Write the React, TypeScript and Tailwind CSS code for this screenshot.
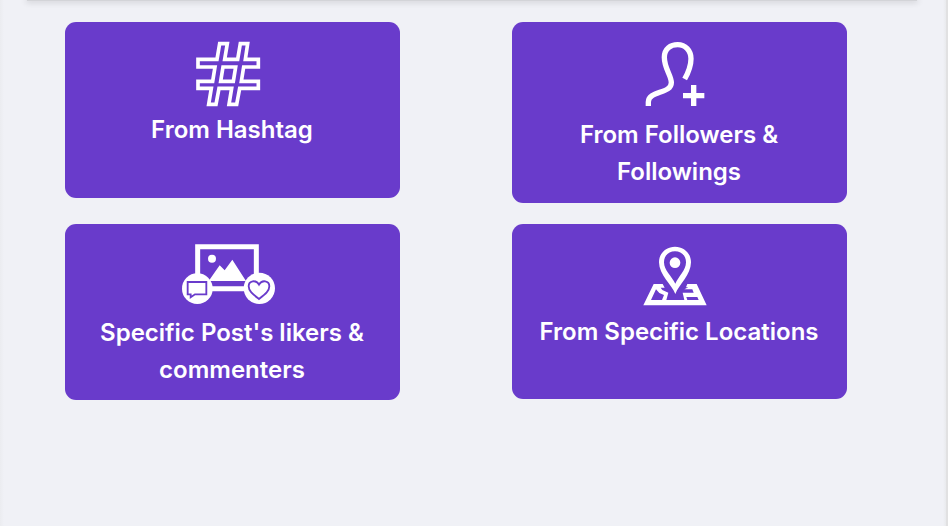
import type { ReactNode } from "react";

interface CardProps {
  title: string;
  className: string;
  children: ReactNode;
}

const SourceCard: React.FC<CardProps> = ({ title, className, children }) => (
  <button
    className={`flex w-[335px] flex-col items-center rounded-[11px] bg-[#693bcb] px-5 pt-2 text-white ${className}`}
  >
    {children}
    <span className="mr-px text-center text-2xl leading-[37px] font-[620]">
      {title}
    </span>
  </button>
);

const HashtagIcon = () => (
  <svg
    className="mr-[5px] h-[81px] w-[100px]"
    viewBox="0 0 300 243"
    fill="none"
    stroke="currentColor"
    strokeWidth="11"
  >
    <path d="M119 41H142L134 88H173L181 41H203L196 88H235V111H191L184 154H235V175H179L170 223H147L155 175H117L108 223H86L94 175H54V154H98L105 111H54V88H111Z" />
    <path d="M129 111H167L160 154H122Z" />
  </svg>
);

const FollowersIcon = () => (
  <svg
    className="mr-[9px] h-[86px] w-[100px]"
    viewBox="0 0 300 258"
    fill="none"
    stroke="currentColor"
  >
    <path
      d="M70 228V216C70 182 139 192 139 158C139 136 118 116 118 82C118 56 137 44 158 44C181 44 198 61 198 86C198 109 189 129 179 147"
      strokeWidth="16"
    />
    <path d="M206 165V228M174 197H238" strokeWidth="16" />
  </svg>
);

const PostIcon = () => (
  <svg className="mr-[5px] h-[82px] w-[120px]" viewBox="0 -9 360 246">
    <path
      d="M83 35H259V161H83Z"
      fill="none"
      stroke="currentColor"
      strokeWidth="15"
    />
    <circle cx="126" cy="71" r="12" fill="currentColor" />
    <path d="M116 138L149 91L164 106L187 74L228 138Z" fill="currentColor" />
    <circle cx="82" cy="161" r="46" fill="currentColor" />
    <circle cx="268" cy="160" r="47" fill="currentColor" />
    <g fill="none" stroke="#693bcb" strokeWidth="5.5">
      <path d="M53 141H109V178H75L62 187V178H53Z" />
      <path d="M267 192C248 177 236 168 236 154C236 137 258 133 267 149C276 133 298 137 298 154C298 168 286 177 267 192Z" />
    </g>
  </svg>
);

const LocationIcon = () => (
  <svg
    className="mr-[9px] h-[81px] w-[100px]"
    viewBox="0 -9 300 243"
    fill="currentColor"
  >
    <path
      fillRule="evenodd"
      d="M151 177C141 151 102 119 102 82C102 54 124 35 150 35C177 35 198 55 198 82C198 119 161 151 151 177ZM151 146C160 125 183 106 183 82C183 62 169 49 150 49C131 49 117 62 117 82C117 106 141 125 151 146Z"
    />
    <circle cx="150" cy="83" r="16" />
    {/* folded map under the pin */}
    <path
      fillRule="evenodd"
      d="M86 147H113L119 158H107L112 165L130 173L124 195H178L173 173H206L202 163H178L190 157H183L187 147H215L245 211H55ZM93 163L78 195H111L117 180L103 174ZM184 186L187 195H221L217 186Z"
    />
  </svg>
);

export default function App() {
  return (
    <div className="flex h-[526px] w-[948px] justify-between overflow-hidden bg-[#f0f1f6] font-['Inter',sans-serif]">
      <div className="w-1 shrink-0 bg-linear-to-r from-[#ebecf0] to-[#f0f1f6]" />
      <div className="w-[939px]">
        {/* lower edge of the panel above */}
        <div className="ml-[23px] h-px w-[890px] bg-[#d3d4d8] shadow-[0_0_6px_1px_rgba(0,0,0,0.2)]" />
        <div className="mt-[21px] ml-[61px] flex gap-28">
          <div className="flex flex-col">
            <SourceCard title="From Hashtag" className="h-44">
              <HashtagIcon />
            </SourceCard>
            <SourceCard
              title="Specific Post's likers & commenters"
              className="mt-[26px] h-44"
            >
              <PostIcon />
            </SourceCard>
          </div>
          <div className="flex flex-col">
            <SourceCard
              title="From Followers & Followings"
              className="h-[181px]"
            >
              <FollowersIcon />
            </SourceCard>
            <SourceCard
              title="From Specific Locations"
              className="mt-[21px] h-[175px]"
            >
              <LocationIcon />
            </SourceCard>
          </div>
        </div>
      </div>
      <div className="w-[5px] shrink-0 border-r-2 border-[#e1e1e2] bg-linear-to-r from-[#f0f1f6] to-[#e9eaed]" />
    </div>
  );
}
